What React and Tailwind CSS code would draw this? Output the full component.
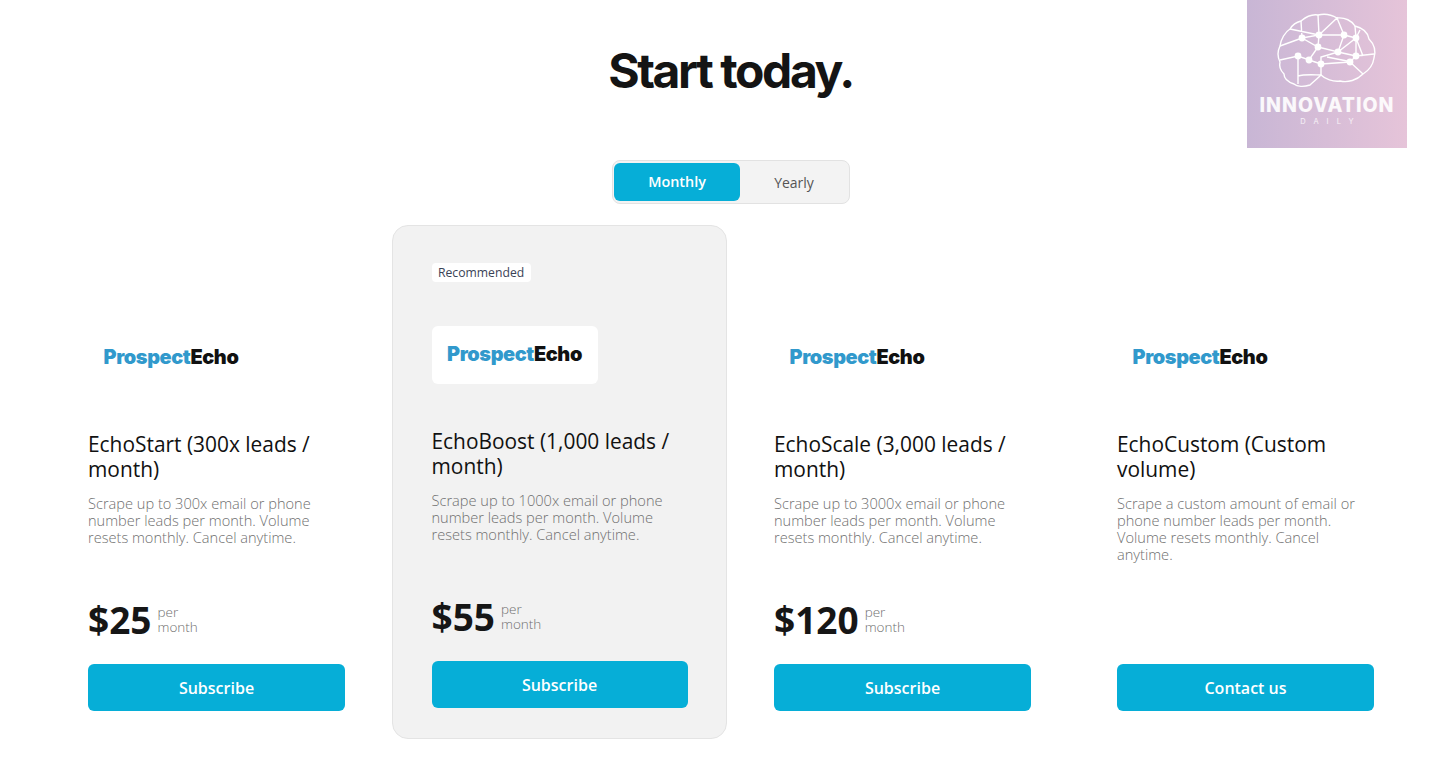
const plans = [
  {
    name: "EchoStart (300x leads / month)",
    text: "Scrape up to 300x email or phone number leads per month. Volume resets monthly. Cancel anytime.",
    price: "$25",
    cta: "Subscribe",
  },
  {
    name: "EchoBoost (1,000 leads / month)",
    text: "Scrape up to 1000x email or phone number leads per month. Volume resets monthly. Cancel anytime.",
    price: "$55",
    cta: "Subscribe",
    featured: true,
  },
  {
    name: "EchoScale (3,000 leads / month)",
    text: "Scrape up to 3000x email or phone number leads per month. Volume resets monthly. Cancel anytime.",
    price: "$120",
    cta: "Subscribe",
  },
  {
    name: "EchoCustom (Custom volume)",
    text: "Scrape a custom amount of email or phone number leads per month. Volume resets monthly. Cancel anytime.",
    cta: "Contact us",
  },
];

const nodes = [
  [55, 38], [72, 35], [97, 35], [109, 38], [71, 47], [91, 52],
  [109, 56], [103, 62], [51, 56], [62, 60], [74, 64],
];

function BrainLogo() {
  return (
    <div className="absolute left-[1247px] top-0 w-[160px] h-[148px] bg-gradient-to-r from-[#c8b6d5] to-[#e6c4d9] flex flex-col items-center">
      <svg width="160" height="96" viewBox="0 0 160 96" fill="none" stroke="white" strokeWidth="1.4" className="shrink-0">
        <path d="M54 21C60 16 65 14 71 15C79 13 85 15 90 18C98 17 105 21 108 26C116 28 121 33 122 39C127 44 129 51 127 58C126 65 121 71 116 74C110 80 101 83 93 81C86 82 78 79 74 75C70 79 66 82 63 85C57 87 50 87 47 84C41 82 37 78 37 74C33 70 32 66 33 62C30 56 31 50 33 46C34 39 38 32 43 29C46 24 50 22 54 21Z" />
        <path d="M71 15L72 35L55 38L33 46M72 35L90 18L97 35L72 35M97 35L109 38L108 26M109 38L113 30M55 38L54 21M55 38L71 47L72 35M71 47L62 60L51 56L33 60M71 47L91 52L97 35M91 52L109 38L109 56L127 54M91 52L109 56L103 62L74 64L62 60M91 52L74 57L74 64M51 56L51 84M74 64L74 75M103 62L116 74M80 57L105 62M109 38L116 56M51 76C58 74 68 75 74 75M72 35L43 29" />
        {nodes.map(([x, y]) => (
          <circle key={`${x}-${y}`} cx={x} cy={y} r="3.4" fill="white" stroke="none" />
        ))}
      </svg>
      <div className="font-['Inter',sans-serif] font-extrabold text-[19.5px] leading-none text-white/90 tracking-[1px] whitespace-nowrap">
        INNOVATION
      </div>
      <div className="font-['Inter',sans-serif] text-[7.5px] leading-none text-white/80 tracking-[8px] ml-[8px] mt-[2px] whitespace-nowrap">
        DAILY
      </div>
    </div>
  );
}

function PlanCard({ plan }) {
  return (
    <div
      className={
        plan.featured
          ? "-mx-[39px] px-[38.5px] pt-[37px] pb-[30px] bg-[#f2f2f2] border border-[#e4e4e4] rounded-2xl h-[514px] flex flex-col"
          : "mb-[28px] flex flex-col"
      }
    >
      {plan.featured && (
        <span className="self-start bg-white rounded-[4px] px-[6.5px] pt-px h-[19px] mb-[44px] flex items-center text-[12.2px] text-[#3a4256] font-['Open_Sans',sans-serif]">
          Recommended
        </span>
      )}
      <div className={`w-[166px] h-[58px] rounded-md flex items-center justify-center ${plan.featured ? "bg-white" : ""}`}>
        <span className="font-['Inter',sans-serif] font-black text-[19.9px] tracking-[-0.02em] text-[#111] -mt-px">
          <span className="text-[#3199cc]">Prospect</span>Echo
        </span>
      </div>
      <h3 className="mt-[45px] text-[20.9px] leading-[25px] font-normal text-[#111] font-['Open_Sans',sans-serif]">
        {plan.name}
      </h3>
      <p className="mt-[13px] h-[68px] text-[14.6px] leading-[17px] font-light text-[#6f6f6f] font-['Open_Sans',sans-serif]">
        {plan.text}
      </p>
      <div className="mt-[33px] h-[48px] flex items-center gap-[6px] font-['Open_Sans',sans-serif]">
        {plan.price && (
          <>
            <span className="text-[37px] leading-none font-bold text-[#161616] -mt-[2px]">{plan.price}</span>
            <span className="flex flex-col text-[13.5px] leading-[15px] font-light text-[#6f6f6f]">
              <span>per</span>
              <span>month</span>
            </span>
          </>
        )}
      </div>
      <button className="mt-[20px] h-[47px] w-full rounded-md bg-[#06aed7] text-white text-[16px] font-semibold font-['Open_Sans',sans-serif]">
        {plan.cta}
      </button>
    </div>
  );
}

export default function App() {
  return (
    <div className="relative w-[1456px] h-[769px] bg-white overflow-hidden">
      <BrainLogo />
      <h1 className="pt-[39px] pl-[5px] text-center text-[48px] leading-[64px] font-bold tracking-[-0.05em] text-[#141414] font-['Inter',sans-serif]">
        Start today.
      </h1>
      <div className="mt-[57px] ml-[612px] w-[238px] h-[44px] px-[1px] py-[2px] rounded-lg bg-[#f3f3f3] border border-[#e2e2e2] flex font-['Open_Sans',sans-serif]">
        <button className="w-[126px] rounded-md bg-[#06aed7] text-white text-[14.4px] font-semibold">Monthly</button>
        <button className="flex-1 text-[14px] text-[#555]">Yearly</button>
      </div>
      <div className="mt-[21px] pl-[88px] grid grid-cols-[257px_257px_257px_257px] gap-x-[86px] items-end">
        {plans.map((plan) => (
          <PlanCard key={plan.name} plan={plan} />
        ))}
      </div>
    </div>
  );
}
